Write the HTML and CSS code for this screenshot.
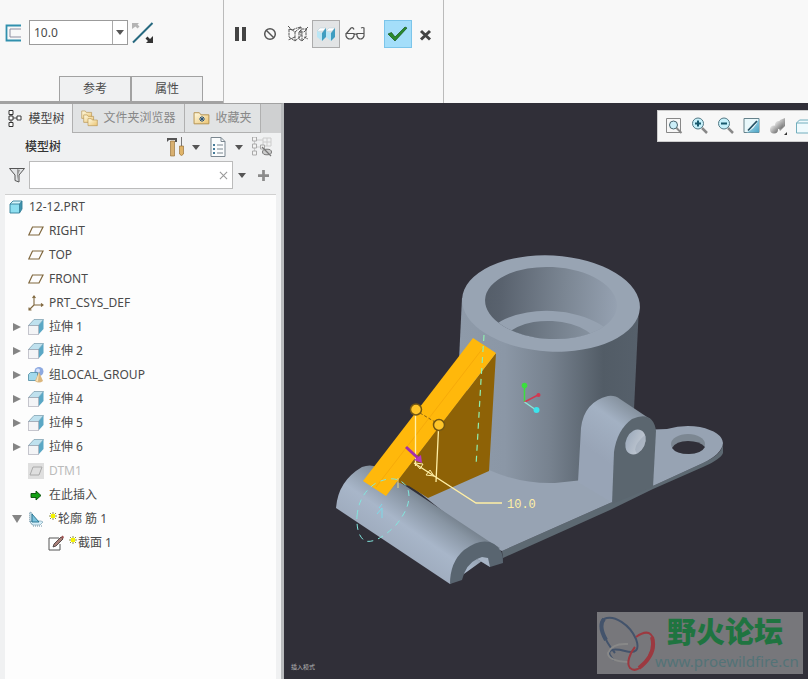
FILE: index.html
```html
<!DOCTYPE html>
<html lang="zh-CN">
<head>
<meta charset="utf-8">
<title>12-12.PRT</title>
<link rel="stylesheet" href="styles.css">
</head>
<body>
<svg class="defs" aria-hidden="true">
  <defs>
    <linearGradient id="blue" x1="0" y1="0" x2="1" y2="1"><stop offset="0" stop-color="#c9effa"/><stop offset="1" stop-color="#4ba3c4"/></linearGradient>
    <linearGradient id="gold" x1="0" y1="0" x2="1" y2="1"><stop offset="0" stop-color="#fffbe5"/><stop offset="1" stop-color="#ebc471"/></linearGradient>
    <linearGradient id="metal" x1="0" y1="0" x2="1" y2="1"><stop offset="0" stop-color="#f4f4f4"/><stop offset="1" stop-color="#666"/></linearGradient>
  </defs>
  <symbol id="i-plane" viewBox="0 0 16 16"><path d="M4.500 4h10.500l-4 8H.8z" fill="none" stroke="#80683f" stroke-width="1.200"/></symbol>
  <symbol id="i-extrude" viewBox="0 0 16 16"><path d="M.5 6.500L6 .5h9.500l-5 6z" fill="#bfe1ee" stroke="#7799aa" stroke-width=".7"/><path d="M15.500.5v9.500l-5 5.500v-9z" fill="#5aa7c5"/><path d="M.5 6.500h10v9H.5z" fill="#f3f4f6" stroke="#778" stroke-width=".8" stroke-dasharray="1 1"/></symbol>
  <symbol id="i-part" viewBox="0 0 16 16"><path d="M2 5l3-3h9l-2.500 3z" fill="#d5f6fc"/><path d="M11.500 5L14 2v8l-2.500 4z" fill="#3f93ad"/><path d="M2 5h9.500v9H2z" fill="#8edff0"/><path d="M2 5l3-3h9v8l-2.500 4H2zM2 5h9.500v9M11.500 5L14 2" fill="none" stroke="#347f98" stroke-width=".9"/></symbol>
  <symbol id="i-csys" viewBox="0 0 16 16"><path d="M6 1v9h9M6 10l-5 5M4.500 3L6 1l1.500 2M13 8.500l2 1.500-2 1.500M1 12.500V15h2.500" fill="none" stroke="#80683f" stroke-width="1.100"/></symbol>
  <symbol id="i-group" viewBox="0 0 16 16"><circle cx="11" cy="4.500" r="4.500" fill="#8da9e0"/><circle cx="10" cy="3.500" r="2" fill="#d6e1fa"/><path d="M.5 7.500l2-2h7v6l-1 2h-8z" fill="#a3d9ec" stroke="#4d8aa1" stroke-width=".8"/><path d="M11 5l4 9q-4 3-8 0z" fill="#dcb77d"/><path d="M11 5l-3 9 2 .5z" fill="#f7e4bf"/></symbol>
  <symbol id="i-dtm" viewBox="0 0 16 16"><path d="M0 0h16v16H0z" fill="#dfdfdf"/><path d="M5 4h9l-3 8H2z" fill="none" stroke="#aaa"/></symbol>
  <symbol id="i-insert" viewBox="0 0 16 16"><path d="M3 6.500h5V4l5 4.500L8 13v-2.500H3z" fill="#14a014" stroke="#084b08" stroke-width=".9"/></symbol>
  <symbol id="i-rib" viewBox="0 0 16 16"><path d="M2 2v9l3 4h10" fill="none" stroke="#6890a3" stroke-dasharray="1 1"/><path d="M2 1l2 1v8l-2 1zM4 10h9l2 1-3 3H5l-3-3z" fill="#d7eff9" stroke="#6b95a8" stroke-width=".6"/><path d="M4 3l7 8H4z" fill="#7cc3de" stroke="#23708c" stroke-width=".9"/></symbol>
  <symbol id="i-sketch" viewBox="0 0 16 16"><path d="M11 3H1v12h11V9" fill="#fff" stroke="#555"/><path d="M5 12l1-3 7-7 2 2-7 7z" fill="#aa817a" stroke="#3d3434" stroke-width=".8"/><path d="M13 2l1.500-1.500L16 2l-1 2z" fill="#a05353"/></symbol>
  <symbol id="i-star" viewBox="0 0 8 8"><path d="M4 0v8M0 4h8M1 1l6 6M7 1L1 7" stroke="#77771a" stroke-width=".8"/><path d="M2 2h4v4H2z" fill="#f5f500"/></symbol>
  <symbol id="i-folder" viewBox="0 0 17 15"><path d="M1 2.500h5l1.500 2H15V13H1z" fill="url(#gold)" stroke="#b4904c" stroke-width=".9"/></symbol>
</svg>

<header class="ribbon">
  <section class="settings" aria-label="尺寸">
    <div class="tools">
      <svg class="ic18" viewBox="0 0 18 18"><path d="M16 1.500H1.500v15H16" fill="none" stroke="#3190ad" stroke-width="1.800"/><path d="M16 5H5v8h11" fill="none" stroke="#8e8ea0"/></svg>
      <div class="combo"><input type="text" value="10.0" aria-label="厚度"><button type="button" aria-label="厚度列表"><i class="down"></i></button></div>
      <button type="button" class="flip" aria-label="更改侧"><svg viewBox="0 0 22 22"><path d="M1 20.500L20.500 1" stroke="#27697f" stroke-width="2"/><path d="M0 1h7L5.500 2.500l2 2-2 2-2-2L0 7z" fill="#b4b4b4"/><path d="M21 21h-7l2-2-2.500-2.500 2-2L18 17l3-3z" fill="#333"/></svg></button>
    </div>
    <nav class="subtabs"><button type="button">参考</button><button type="button">属性</button></nav>
  </section>
  <section class="actions" aria-label="操作">
    <button type="button" aria-label="暂停"><svg viewBox="0 0 28 28"><path d="M7 7h4v14H7zM14 7h4v14h-4z" fill="#444"/></svg></button>
    <button type="button" aria-label="无预览"><svg viewBox="0 0 28 28"><circle cx="14" cy="14" r="5.300" fill="none" stroke="#555" stroke-width="1.500"/><path d="M10 10l8 8" stroke="#555" stroke-width="1.500"/></svg></button>
    <button type="button" aria-label="分离"><svg viewBox="0 0 28 28"><path d="M5 9l3 1 5-2M5 9v8l6 4v-9l-4-3M11 12l6-5v9l-6 5M17 7l-4 1M15 12l3-3h5l-3 3zM15 12v7l3 2 4-4V9M4 6l4 4M11 17l-7 3M18 21v-8M20 17l4 2M22 9l2-2" fill="none" stroke="#555" stroke-dasharray="3 .6"/></svg></button>
    <button type="button" class="pressed" aria-label="连接"><svg viewBox="0 0 28 28"><path d="M5 11l3-3h6l-3 3zM14 11l3-3h6l-3 3z" fill="#fff" stroke="#b1cdd7" stroke-width=".5"/><path d="M5 11l5 2v8l-5-4zM14 11l5 2v8l-5-4z" fill="#b9e6f5"/><path d="M10 13l4-5v9l-4 4zM19 13l4-5v9l-4 4z" fill="#3f9dc0"/></svg></button>
    <button type="button" aria-label="验证"><svg viewBox="0 0 28 28"><path d="M6 13.500h8v2.500q-1 3-4 3t-4-3zM17 13.500h7v2.500q-1 3-3.500 3t-3.500-3zM14 15q1.500-2 3 0M6 14l5-6q2-1 3 1.500M24 14V8q-1-1-3 0" fill="none" stroke="#555" stroke-width="1.200"/></svg></button>
    <button type="button" class="ok" aria-label="确定"><svg viewBox="0 0 28 28"><path d="M4 14l3.500-1.500L11 17 21 7l2 1-12 13z" fill="#288b2d" stroke="#155219" stroke-width=".7"/></svg></button>
    <button type="button" aria-label="取消"><svg viewBox="0 0 28 28"><path d="M9 11l9 8.500M18 11l-9 8.500" stroke="#444" stroke-width="3"/></svg></button>
  </section>
</header>

<main class="work">
  <aside class="side">
    <nav class="tabs">
      <button type="button" class="active"><svg class="ic18" viewBox="0 0 18 18"><path d="M4 4v9M4 8h7" stroke="#444"/><path d="M2 .5h4v4H2zM2 6h4v4H2zM2 12.500h4v4H2zM10 6h4v4h-4z" fill="#fff" stroke="#333"/></svg>模型树</button>
      <button type="button"><svg class="ic18" viewBox="0 0 18 18"><use href="#i-folder" width="12" height="11"/><use href="#i-folder" x="2" y="4" width="12" height="11"/><use href="#i-folder" x="6" y="8" width="12" height="10"/></svg>文件夹浏览器</button>
      <button type="button"><svg class="ic18" viewBox="0 0 18 18"><use href="#i-folder" y="1" width="18" height="16"/><path d="M9 7v6M6 10h6M7 8l4 4M11 8l-4 4" stroke="#26527c"/></svg>收藏夹</button>
    </nav>
    <div class="panel">
      <div class="titlebar">
        <h1>模型树</h1>
        <button type="button" aria-label="设置"><svg class="ic20" viewBox="0 0 20 20"><path d="M1 5V1h10v4H9V3H3z" fill="#555"/><path d="M4.500 4h4v15h-4z" fill="#d8b071" stroke="#8f672b" stroke-width=".6"/><path d="M15 0h1v10h-1z" fill="#777"/><path d="M13.500 9h4v8q-2 3-4 0z" fill="#e0b468" stroke="#8f672b" stroke-width=".6"/></svg><i class="down"></i></button>
        <button type="button" aria-label="显示"><svg class="ic20" viewBox="0 0 20 20"><path d="M2 .5h10l4 4v15H2z" fill="#fafcfd" stroke="#7b8790"/><path d="M12 .5v4h4M8 8h6M8 12h6M8 16h6" fill="none" stroke="#7b8790"/><path d="M4 7h2v2H4zM4 11h2v2H4zM4 15h2v2H4z" fill="#457b99"/></svg><i class="down"></i></button>
        <button type="button" class="last" aria-label="隐藏项"><svg class="ic20" viewBox="0 0 20 20"><path d="M2.500 1v16M11 1h8v8h-8zM4 10h6M4 3h7M15 1v8M11 5h8" stroke="#ccc" fill="none"/><path d="M.5 0h4v4h-4zM.5 7h4v4h-4zM.5 14h4v4h-4zM8.500 8h4v4h-4z" fill="#f3f3f3" stroke="#aaa"/><ellipse cx="15" cy="15" rx="4.500" ry="2.800" fill="#ccc" stroke="#777"/><path d="M10 10l9 9" stroke="#777" stroke-width="1.300"/></svg></button>
      </div>
      <div class="searchbar">
        <svg class="funnel" viewBox="0 0 16 16"><path d="M.5 1.500h15L10 8v7l-4-1.500V8z" fill="#e3e5e7" stroke="#555"/><path d="M8 2l3 1-2 5v6L8 9z" fill="#999"/></svg>
        <div class="search"><input type="text" aria-label="搜索"><button type="button" aria-label="清除"><svg viewBox="0 0 10 10"><path d="M1 1l8 8M9 1L1 9" stroke="#999" stroke-width="1.200"/></svg></button></div>
        <button type="button" class="more" aria-label="搜索选项"><i class="down"></i></button>
        <button type="button" class="plus" aria-label="添加"><svg viewBox="0 0 12 12"><path d="M6 0v12M0 6h12" stroke="#8b8b8b" stroke-width="3"/></svg></button>
      </div>
      <div class="tree">
        <div class="row root"><svg><use href="#i-part"/></svg>12-12.PRT</div>
        <ul>
          <li class="row"><span class="gap"></span><svg><use href="#i-plane"/></svg>RIGHT</li>
          <li class="row"><span class="gap"></span><svg><use href="#i-plane"/></svg>TOP</li>
          <li class="row"><span class="gap"></span><svg><use href="#i-plane"/></svg>FRONT</li>
          <li class="row"><span class="gap"></span><svg><use href="#i-csys"/></svg>PRT_CSYS_DEF</li>
          <li class="row"><button type="button" class="tw" aria-label="展开"></button><svg><use href="#i-extrude"/></svg>拉伸 1</li>
          <li class="row"><button type="button" class="tw" aria-label="展开"></button><svg><use href="#i-extrude"/></svg>拉伸 2</li>
          <li class="row"><button type="button" class="tw" aria-label="展开"></button><svg><use href="#i-group"/></svg>组LOCAL_GROUP</li>
          <li class="row"><button type="button" class="tw" aria-label="展开"></button><svg><use href="#i-extrude"/></svg>拉伸 4</li>
          <li class="row"><button type="button" class="tw" aria-label="展开"></button><svg><use href="#i-extrude"/></svg>拉伸 5</li>
          <li class="row"><button type="button" class="tw" aria-label="展开"></button><svg><use href="#i-extrude"/></svg>拉伸 6</li>
          <li class="row off"><span class="gap"></span><svg><use href="#i-dtm"/></svg>DTM1</li>
          <li class="row"><span class="gap"></span><svg><use href="#i-insert"/></svg>在此插入</li>
          <li>
            <div class="row"><button type="button" class="tw open" aria-label="折叠"></button><svg><use href="#i-rib"/></svg><svg class="star"><use href="#i-star"/></svg>轮廓 筋 1</div>
            <ul class="sub"><li class="row"><svg><use href="#i-sketch"/></svg><svg class="star"><use href="#i-star"/></svg>截面 1</li></ul>
          </li>
        </ul>
      </div>
    </div>
  </aside>

  <section class="view" aria-label="图形窗口">
    <svg class="model" viewBox="284 103 524 576" role="img" aria-label="三维模型">
      <defs>
        <linearGradient id="body" gradientUnits="userSpaceOnUse" x1="460" y1="0" x2="639" y2="0"><stop offset="0" stop-color="#8e9aa9"/><stop offset=".25" stop-color="#8b97a6"/><stop offset=".5" stop-color="#77828f"/><stop offset=".8" stop-color="#525c66"/><stop offset="1" stop-color="#56606b"/></linearGradient>
        <linearGradient id="bore"><stop offset="0" stop-color="#555e69"/><stop offset=".12" stop-color="#59626e"/><stop offset=".6" stop-color="#7b8693"/><stop offset="1" stop-color="#95a1b1"/></linearGradient>
        <linearGradient id="bore2"><stop offset="0" stop-color="#5b6570"/><stop offset="1" stop-color="#8b97a5"/></linearGradient>
        <linearGradient id="tube" gradientUnits="userSpaceOnUse" x1="435" y1="494" x2="394" y2="553"><stop offset="0" stop-color="#69747f"/><stop offset=".25" stop-color="#8895a3"/><stop offset=".6" stop-color="#a8b6c9"/><stop offset="1" stop-color="#9eabbd"/></linearGradient>
        <linearGradient id="lug" gradientUnits="userSpaceOnUse" x1="624" y1="402" x2="590" y2="450"><stop offset="0" stop-color="#86929f"/><stop offset=".35" stop-color="#a3b1c3"/><stop offset="1" stop-color="#98a4b6"/></linearGradient>
        <linearGradient id="pin"><stop offset="0" stop-color="#a0adbe"/><stop offset="1" stop-color="#c3cad3"/></linearGradient>
        <clipPath id="mouth"><ellipse cx="551" cy="303" rx="66" ry="36" transform="rotate(3 551 303)"/></clipPath>
        <clipPath id="eye"><ellipse cx="635.500" cy="442" rx="9.500" ry="13" transform="rotate(25 635.500 442)"/></clipPath>
      </defs>
      <path d="M502 551L610 503 655 485 703 463Q723 454 723 443V453Q721 459 703 467L653 489 610 510 503 558z" fill="#5d6972"/>
      <path d="M410 485L489 468 578 480 640 430 667 429Q684 424 700 427 722 432 723 443 722 454 703 463L655 485 610 503 502 551 485 545z" fill="#97a3b3"/>
      <ellipse cx="688" cy="444" rx="17" ry="10" fill="#7c8792"/>
      <path d="M672 448Q676 441 688 441T705 447Q701 454 689 454 676 454 672 448z" fill="#302f38"/>
      <path d="M462 298L459 360 489 470Q520 484 555 483L583 480 634 409 639 306z" fill="url(#body)"/>
      <ellipse cx="551" cy="303.500" rx="89" ry="48" transform="rotate(3 551 303.500)" fill="#98a4b3"/>
      <ellipse cx="551" cy="303" rx="66" ry="36" transform="rotate(3 551 303)" fill="url(#bore)"/>
      <g clip-path="url(#mouth)"><ellipse cx="551" cy="347" rx="67" ry="36" transform="rotate(3 551 347)" fill="#96a2b1"/><ellipse cx="551" cy="348" rx="49" ry="27" transform="rotate(3 551 348)" fill="url(#bore2)"/></g>
      <path d="M578 482L581 428Q584 402 608 396 615 395 620 399L650 419 613 503z" fill="url(#lug)"/>
      <path d="M612 504L614 452Q617 430 632 419 653 410 656 431L653 487z" fill="#5b666f"/>
      <ellipse cx="635.500" cy="442" rx="9.500" ry="13" transform="rotate(25 635.500 442)" fill="url(#pin)"/>
      <path d="M640 455Q628 450 646 434V456z" fill="#98a4b4" clip-path="url(#eye)" opacity=".5"/>

      <path d="M336 508Q338 481 362 467 370 464 377 467L487 540 500 548 450 584z" fill="url(#tube)"/>
      <path d="M450 584Q450 562 464 550 482 537 494 544 504 550 503 563L490 567 477 559Q466 564 462 580z" fill="#596570"/>
      <path d="M477 559L490 567 488 558 482 557z" fill="#a7b4c5"/>
      <path d="M496 353L489 471 428 498 409 486 397 482 386 496z" fill="#8e6206"/>
      <path d="M473 338L496 353 386 496 363 481z" fill="#ffb80b"/>
      <path d="M483 348L376 487" stroke="#f7aa09" fill="none"/>
      <path d="M484 335L481 380 476 466" fill="none" stroke="#90efb0" stroke-width="1.200" stroke-dasharray="6 5"/>
      <path d="M357 516Q359 494 376 483 397 473 407 487 414 503 396 525 377 544 365 541 356 535 357 516z" fill="none" stroke="#82e7df" stroke-dasharray="6 5"/>
      <path d="M377 514l5-6v10M379 508l3-4" fill="none" stroke="#7dd9e7"/>
      <path d="M398 478v10" stroke="#e8d68d"/>
      <path d="M415.500 413V466M438.500 429L436 482M414 463L476 503H502" fill="none" stroke="#ffefa5" stroke-width="1.300"/>
      <path d="M415 463l8 1-3 5zM434 476l-8-1 4-5z" fill="none" stroke="#ffefa5"/>
      <path d="M420 413L435 422" stroke="#815e17" stroke-dasharray="3 2"/>
      <path d="M406 447L419 459" stroke="#a42eaa" stroke-width="3"/><path d="M422 463l-8-3 7-5z" fill="#b53abb"/>
      <circle cx="416" cy="409.500" r="5.500" fill="#ffc529" stroke="#745712" stroke-width="1.500"/><circle cx="439" cy="425" r="5.500" fill="#ffc529" stroke="#745712" stroke-width="1.500"/>
      <text class="dim" x="507" y="508">10.0</text>
      <path d="M524.500 402V386" stroke="#3bdf3d" stroke-width="1.500"/><circle cx="524.500" cy="385.500" r="2.800" fill="#3bdf3d"/>
      <path d="M524.500 402L538 395" stroke="#d23850" stroke-width="1.500"/><circle cx="538.500" cy="395" r="2" fill="#d23850"/>
      <path d="M524.500 402L536 410" stroke="#8be6d8" stroke-width="1.500"/><circle cx="536.500" cy="410" r="3" fill="#3be5ed"/>
    </svg>
    <div class="viewbar">
      <button type="button" aria-label="重新调整"><svg viewBox="0 0 18 18"><path d="M1.500 1.500h14v14h-14z" fill="#f7f7f7" stroke="#888"/><circle cx="8.500" cy="8" r="4" fill="#cbeef8" stroke="#47636d"/><path d="M11.500 11l5 5" stroke="#888" stroke-width="2"/></svg></button>
      <button type="button" aria-label="放大"><svg viewBox="0 0 18 18"><circle cx="7" cy="6.500" r="5.500" fill="#c6f0fa" stroke="#547985"/><path d="M7 3.500v6M4 6.500h6" stroke="#17596d" stroke-width="2"/><path d="M11 11l5 5" stroke="#888" stroke-width="2.500"/></svg></button>
      <button type="button" aria-label="缩小"><svg viewBox="0 0 18 18"><circle cx="7" cy="6.500" r="5.500" fill="#c6f0fa" stroke="#547985"/><path d="M4 6.500h6" stroke="#17596d" stroke-width="2"/><path d="M11 11l5 5" stroke="#888" stroke-width="2.500"/></svg></button>
      <button type="button" aria-label="重画"><svg viewBox="0 0 18 18"><path d="M1 1.500h15v14H1z" fill="#e9f8fb" stroke="#66818a"/><path d="M16 1.500v14H3q9-3 13-14z" fill="url(#blue)"/><path d="M5 13.500L14 4" stroke="#245064" stroke-width="1.800" fill="none"/></svg></button>
      <button type="button" aria-label="显示样式"><svg viewBox="0 0 18 18"><circle cx="5" cy="12.500" r="4" fill="url(#metal)"/><path d="M8 8l3-5 5-2v8l-5 5z" fill="url(#metal)"/><circle cx="10" cy="8" r="4" fill="url(#metal)"/><path d="M18 15v3h-3z" fill="#333"/></svg></button>
      <button type="button" aria-label="已保存方向"><svg viewBox="0 0 18 18"><path d="M1.500 6l3-3H18v13H1.500zM1.500 6H18" fill="#effafd" stroke="#72aebd"/></svg></button>
    </div>
    <p class="mode">插入模式</p>
    <div class="mark">
      <svg viewBox="0 0 60 62"><g fill="none"><path d="M18 41C7 28 0 10 7 7 17 2 33 13 39 27 43 38 39 42 28 39 12 35 8 40 17 48" stroke="#43536b" stroke-width="2"/><path d="M7 7Q1 14 9 28" stroke="#43536b" stroke-width="4"/><path d="M31 32Q15 31 11 41 11 49 31 50" stroke="#888" stroke-width="2"/><path d="M39 25C53 15 59 24 55 37 50 52 40 62 33 56 29 51 33 41 38 35" stroke="#9c3940" stroke-width="2"/><path d="M55 25Q60 42 42 56" stroke="#9c3940" stroke-width="4"/></g></svg>
      <div class="words"><strong>野火论坛</strong><span>www.proewildfire.cn</span></div>
    </div>
  </section>
</main>
</body>
</html>
```
FILE: styles.css
```css
* { box-sizing: border-box; }
body {
  margin: 0;
  min-height: 100vh;
  display: flex;
  flex-direction: column;
  background: #f8f8f8;
  color: #4a4a4a;
  font: 12px/24px "Noto Sans", "Noto Sans CJK SC", sans-serif;
}
button, input { font: inherit; color: inherit; padding: 0; margin: 0; border: 0; background: none; }
button { display: flex; align-items: center; justify-content: center; }
input { outline: 0; min-width: 0; }
ul { list-style: none; margin: 0; padding: 0; }
svg { display: block; flex: none; }
.defs { position: absolute; width: 0; height: 0; }
.down { border: 4px solid transparent; border-top: 5px solid #555; border-bottom: 0; }
.ic18 { width: 18px; height: 18px; }
.ic20 { width: 20px; height: 20px; }

.ribbon { display: flex; height: 103px; }
.settings {
  width: 224px;
  display: flex;
  flex-direction: column;
  justify-content: space-between;
  padding-top: 20px;
  border-right: 1px solid #bbb;
}
.tools { display: flex; align-items: center; padding-left: 5px; }
.combo { display: flex; width: 99px; height: 25px; margin: 0 4px 0 6px; border: 1px solid #9b9b9b; background: #fff; }
.combo input { flex: 1; padding-left: 4px; }
.combo button { width: 15px; border-left: 1px solid #aaa; }
.flip svg { width: 22px; height: 22px; }
.subtabs { display: flex; padding-left: 59px; border-bottom: 2px solid #a2a2a2; }
.subtabs button { width: 72px; height: 25px; border: 1px solid #a2a2a2; border-bottom: 0; background: #f0f1f2; }
.actions {
  width: 220px;
  display: flex;
  align-items: flex-start;
  padding: 20px 0 0 4px;
  border-right: 1px solid #bbb;
}
.actions button { width: 28px; height: 28px; border: 1px solid transparent; }
.actions svg { width: 28px; height: 28px; }
.actions .pressed { background: #e2e4e5; border-color: #acacac; }
.actions .ok { margin-left: 16px; background: #a4defa; border-color: #7cc5ea; }

.work { flex: 1; display: flex; }
.side {
  width: 284px;
  flex: none;
  display: flex;
  flex-direction: column;
  border-top: 1px solid #a2a2a2;
  border-right: 3px solid #b9bbbd;
  background: #f0f1f2;
}
.tabs { display: flex; height: 29px; background: #cfd0d1; }
.tabs button { gap: 4px; color: #888; background: #e1e3e4; border-right: 1px solid #b0b0b0; border-bottom: 1px solid #b0b0b0; width: 76px; }
.tabs button:nth-child(2) { width: 112px; }
.tabs .active { width: 73px; gap: 3px; color: #444; background: #f0f1f2; border-bottom: 0; }
.panel { flex: 1; display: flex; flex-direction: column; padding: 0 5px; }
.titlebar { display: flex; align-items: center; height: 28px; padding-left: 20px; }
.titlebar h1 { flex: 1; margin: 0; font-size: 12px; font-weight: 500; color: #333; }
.titlebar button { gap: 6px; margin-right: 9px; }
.titlebar .last { margin-right: 4px; }
.searchbar { display: flex; align-items: center; height: 28px; padding-left: 4px; }
.funnel { width: 16px; height: 16px; }
.search { display: flex; width: 204px; height: 28px; margin: 0 5px 0 4px; border: 1px solid #bbb; background: #fff; }
.search input { flex: 1; }
.search button { width: 18px; }
.search button svg { width: 9px; height: 9px; }
.plus { margin-left: 12px; }
.plus svg { width: 11px; height: 11px; }
.tree { flex: 1; margin-top: 5px; border-top: 1px solid #d0d0d0; background: #fdfdfd; }
.row { display: flex; align-items: center; height: 24px; white-space: pre; }
.row svg { width: 16px; height: 16px; margin-right: 5px; }
.row .star { width: 8px; height: 8px; margin: 0 1px 6px 0; }
.root { padding-left: 3px; }
.gap { width: 23px; }
.tw { width: 23px; }
.tw::before { content: ""; border: 4px solid transparent; border-left: 8px solid #858585; border-right: 0; }
.tw.open::before { border: 5px solid transparent; border-top: 8px solid #858585; border-bottom: 0; }
.sub { padding-left: 43px; }
.off { color: #bbb; }

.view { position: relative; flex: 1; min-width: 0; overflow: hidden; background: #302f38; }
.model { width: 100%; height: 100%; }
.dim { font: 12px "Liberation Mono", monospace; fill: #ffefa5; }
.viewbar {
  position: absolute;
  top: 7px;
  right: -10px;
  display: flex;
  align-items: center;
  gap: 8px;
  height: 32px;
  padding: 0 4px 0 7px;
  border: 1px solid #ccc;
  background: #f7f7f7;
}
.viewbar svg { width: 18px; height: 18px; }
.mode { position: absolute; left: 7px; bottom: 8px; margin: 0; font-size: 6px; line-height: 8px; color: #b5b5b5; }
.mark {
  position: absolute;
  right: 5px;
  bottom: 5px;
  display: flex;
  width: 206px;
  height: 62px;
  background: #77777b;
}
.mark svg { width: 60px; height: 62px; }
.words { display: flex; flex-direction: column; margin-left: -2px; white-space: nowrap; }
.words strong { padding-left: 12px; font-size: 29px; line-height: 40px; font-weight: 900; color: #1f7440; }
.words span { font-size: 15px; line-height: 18px; color: #537377; }
```
